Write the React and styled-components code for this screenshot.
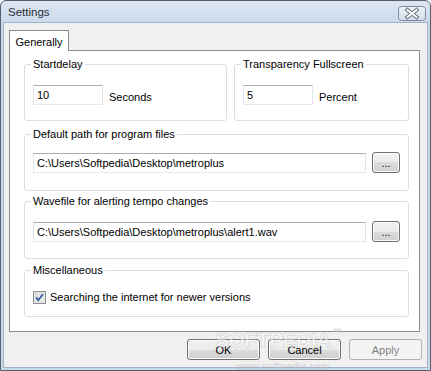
import React from "react";
import styled, { createGlobalStyle } from "styled-components";

const GlobalStyle = createGlobalStyle`
  html, body {
    margin: 0;
    padding: 0;
    background: #ffffff;
  }
  * {
    box-sizing: border-box;
  }
`;

const CloseIcon = () => (
  <svg width="28" height="15" viewBox="0 0 28 15">
    <defs>
      <linearGradient id="cbg" x1="0" y1="0" x2="0" y2="1">
        <stop offset="0" stopColor="#eef3f9" />
        <stop offset="0.5" stopColor="#dfe7f1" />
        <stop offset="1" stopColor="#d2dce9" />
      </linearGradient>
    </defs>
    <rect x="0.5" y="0.5" width="27" height="14" rx="3" fill="url(#cbg)" stroke="#7d8a9c" />
    <path d="M9.5 4 L18.5 11 M18.5 4 L9.5 11" stroke="#5f6a78" strokeWidth="4" strokeLinecap="square" />
    <path d="M9.5 4 L18.5 11 M18.5 4 L9.5 11" stroke="#ffffff" strokeWidth="2" strokeLinecap="square" />
  </svg>
);

const CheckIcon = () => (
  <svg width="13" height="13" viewBox="0 0 13 13">
    <defs>
      <linearGradient id="chk" x1="0" y1="0" x2="1" y2="1">
        <stop offset="0" stopColor="#dcdcdc" />
        <stop offset="1" stopColor="#f6f6f6" />
      </linearGradient>
    </defs>
    <rect x="0.5" y="0.5" width="12" height="12" fill="#f4f4f4" stroke="#8e8f8f" />
    <rect x="2" y="2" width="9" height="9" fill="url(#chk)" stroke="#b8babc" strokeWidth="0.5" />
    <path d="M3.2 6.4 L5.3 9.2 L9.8 3.2" fill="none" stroke="#3c5a9e" strokeWidth="1.8" />
  </svg>
);

export default function App() {
  return (
    <>
      <GlobalStyle />
      <Window>
        <TitleBar>
          <Title>Settings</Title>
          <CloseButton>
            <CloseIcon />
          </CloseButton>
        </TitleBar>
        <Client>
          <TabStrip>
            <Tab>Generally</Tab>
          </TabStrip>
          <Panel>
            <Row>
              <Group $width="203px" $height="63px" $pt="15px">
                <Legend>Startdelay</Legend>
                <FieldLine>
                  <TextBox $width="70px">10</TextBox>
                  <Unit>Seconds</Unit>
                </FieldLine>
              </Group>
              <Group $grow $height="63px" $pt="15px">
                <Legend>Transparency Fullscreen</Legend>
                <FieldLine>
                  <TextBox $width="70px">5</TextBox>
                  <Unit>Percent</Unit>
                </FieldLine>
              </Group>
            </Row>
            <Group $mt="7px" $height="63px" $pt="12px">
              <Legend>Default path for program files</Legend>
              <PathLine>
                <TextBox $width="333px" $shift="1px">
                  C:\Users\Softpedia\Desktop\metroplus
                </TextBox>
                <BrowseButton>...</BrowseButton>
              </PathLine>
            </Group>
            <Group $mt="4px" $height="64px" $pt="14px">
              <Legend>Wavefile for alerting tempo changes</Legend>
              <PathLine>
                <TextBox $width="333px" $shift="1px">
                  C:\Users\Softpedia\Desktop\metroplus\alert1.wav
                </TextBox>
                <BrowseButton>...</BrowseButton>
              </PathLine>
            </Group>
            <Group $mt="5px" $height="53px" $pt="15px">
              <Legend>Miscellaneous</Legend>
              <CheckLine>
                <CheckIcon />
                <span>Searching the internet for newer versions</span>
              </CheckLine>
            </Group>
          </Panel>
          <ButtonBar>
            <DialogButton>OK</DialogButton>
            <DialogButton>Cancel</DialogButton>
            <DialogButton disabled>Apply</DialogButton>
          </ButtonBar>
        </Client>
        <Watermark>
          SOFTPEDIA<Tm>™</Tm>
        </Watermark>
        <WatermarkUrl>www.softpedia.com</WatermarkUrl>
      </Window>
    </>
  );
}

const Window = styled.div`
  position: relative;
  width: 431px;
  height: 371px;
  display: flex;
  flex-direction: column;
  border: 1px solid #56606c;
  border-radius: 6px 6px 0 0;
  background: linear-gradient(#dde7f3 0px, #cbd9ea 22px, #c9d8ea 100%);
  font-family: "Liberation Sans", Arial, sans-serif;
  font-size: 11px;
  color: #000;
  overflow: hidden;
`;

const TitleBar = styled.div`
  height: 21px;
  display: flex;
  align-items: center;
  justify-content: space-between;
  padding: 0 4px 0 7px;
`;

const Title = styled.span`
  font-size: 11.5px;
  color: #2a2f36;
  margin-top: 1px;
`;

const CloseButton = styled.div`
  display: flex;
  width: 28px;
  height: 15px;
  margin-top: 3px;
`;

const Client = styled.div`
  flex: 1;
  display: flex;
  flex-direction: column;
  margin: 0 2px 2px 2px;
  padding: 7px 5px 0 5px;
  border: 1px solid #a3b3c7;
  background: #f0f0f0;
`;

const TabStrip = styled.div`
  display: flex;
  height: 20px;
`;

const Tab = styled.div`
  position: relative;
  z-index: 1;
  width: 60px;
  height: 21px;
  display: flex;
  align-items: center;
  justify-content: center;
  padding-top: 1px;
  background: #ffffff;
  border: 1px solid #898c95;
  border-bottom: none;
`;

const Panel = styled.div`
  width: 411px;
  height: 282px;
  display: flex;
  flex-direction: column;
  padding: 7px 10px 0 14px;
  background: #ffffff;
  border: 1px solid #898c95;
`;

const Row = styled.div`
  display: flex;
  gap: 7px;
`;

const Group = styled.fieldset`
  margin: ${(p) => p.$mt || "0"} 0 0 0;
  padding: ${(p) => p.$pt} 8px 0 8px;
  min-width: 0;
  width: ${(p) => p.$width || "auto"};
  flex: ${(p) => (p.$grow ? "1" : "none")};
  height: ${(p) => p.$height};
  border: 1px solid #d5dfe5;
  border-radius: 3px;
`;

const Legend = styled.legend`
  margin-left: -2px;
  padding: 0 2px;
  line-height: 12px;
  font-size: 11px;
`;

const FieldLine = styled.div`
  display: flex;
  align-items: flex-start;
  gap: 6px;
`;

const TextBox = styled.div`
  width: ${(p) => p.$width};
  height: 20px;
  margin-top: ${(p) => p.$shift || "0"};
  padding: 0 3px;
  display: flex;
  align-items: center;
  line-height: 13px;
  white-space: nowrap;
  background: #ffffff;
  border: 1px solid #e2e3ea;
  border-top-color: #abadb3;
  border-bottom-color: #e3e9ef;
`;

const Unit = styled.span`
  margin-top: 6px;
  line-height: 13px;
`;

const PathLine = styled.div`
  display: flex;
  align-items: flex-start;
  gap: 6px;
`;

const buttonFace = `
  border: 1px solid #707070;
  border-radius: 3px;
  background: linear-gradient(#f2f2f2 0%, #ebebeb 50%, #dddddd 50%, #cfcfcf 100%);
  box-shadow: inset 0 0 0 1px #fbfbfb;
  font-family: "Liberation Sans", Arial, sans-serif;
  font-size: 11px;
  color: #000;
  padding: 0;
`;

const BrowseButton = styled.button`
  ${buttonFace}
  width: 28px;
  height: 21px;
  line-height: 13px;
  padding-top: 2px;
`;

const CheckLine = styled.div`
  display: flex;
  align-items: center;
  gap: 4px;
  margin-left: 0;
  line-height: 13px;
`;

const ButtonBar = styled.div`
  display: flex;
  justify-content: flex-end;
  gap: 8px;
  margin-top: 7px;
`;

const DialogButton = styled.button`
  ${buttonFace}
  width: 73px;
  height: 21px;
  &:disabled {
    border-color: #adb2b5;
    background: #f4f4f4;
    box-shadow: none;
    color: #838383;
  }
`;

const Watermark = styled.div`
  position: absolute;
  left: 214px;
  top: 326px;
  font-family: "Liberation Sans", Arial, sans-serif;
  font-weight: bold;
  font-size: 21px;
  letter-spacing: -0.5px;
  color: rgba(255, 255, 255, 0.55);
  -webkit-text-stroke: 1px rgba(160, 160, 160, 0.3);
  pointer-events: none;
`;

const Tm = styled.span`
  font-size: 9px;
  vertical-align: 12px;
  margin-left: 2px;
`;

const WatermarkUrl = styled.div`
  position: absolute;
  left: 235px;
  top: 360px;
  font-family: "Liberation Sans", Arial, sans-serif;
  font-weight: bold;
  font-size: 10px;
  color: rgba(170, 170, 170, 0.35);
  pointer-events: none;
`;
